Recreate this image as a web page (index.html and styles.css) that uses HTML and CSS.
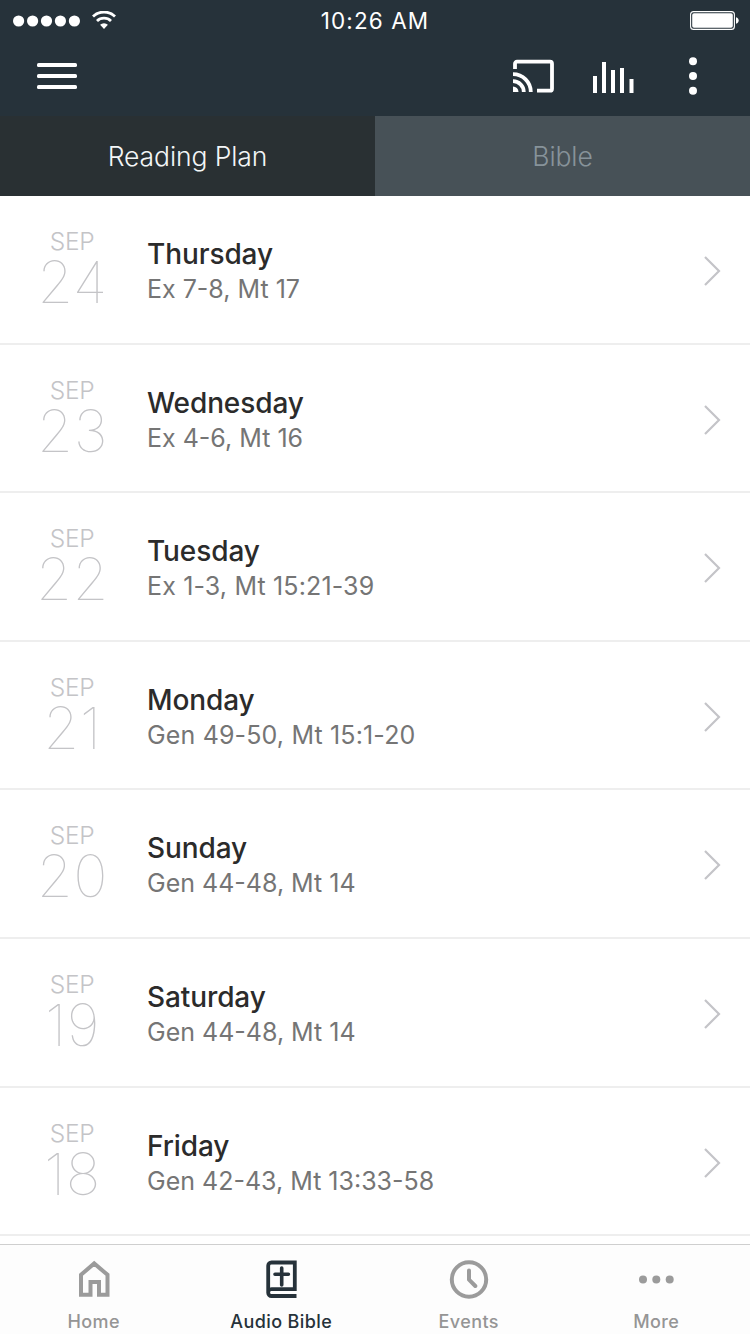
FILE: index.html
```html
<!DOCTYPE html>
<html lang="en">
<head>
    <meta charset="UTF-8">
    <meta name="viewport" content="width=device-width, initial-scale=1.0">
    <title>Audio Bible</title>
    <link rel="stylesheet" href="styles.css">
</head>
<body>
    <header class="header">
        <div class="status-bar">
            <div class="status-left">
                <svg class="signal" width="67" height="12" viewBox="0 0 67 12">
                    <circle cx="5.6" cy="6" r="5.6"/>
                    <circle cx="19.6" cy="6" r="5.6"/>
                    <circle cx="33.5" cy="6" r="5.6"/>
                    <circle cx="47.4" cy="6" r="5.6"/>
                    <circle cx="61.4" cy="6" r="5.6"/>
                </svg>
                <svg class="wifi" width="24" height="18" viewBox="0 0 24 18">
                    <path d="M1 5.5a15.8 15.8 0 0 1 22 0M5 10a10 10 0 0 1 14 0" fill="none" stroke="#fff" stroke-width="2.8"/>
                    <path d="M12 18l-3.9-4.2a5.6 5.6 0 0 1 7.8 0z"/>
                </svg>
            </div>
            <div class="time">10:26 AM</div>
            <div class="status-right">
                <svg class="battery" width="49" height="19" viewBox="0 0 49 19">
                    <rect x=".6" y=".6" width="43.8" height="17.8" rx="3" fill="none" stroke="#fff" stroke-width="1.1"/>
                    <rect x="2.2" y="2.2" width="40.6" height="14.6" rx="1.8"/>
                    <path d="M46 6.2c3.6 1.2 3.6 5.4 0 6.6z"/>
                </svg>
            </div>
        </div>

        <div class="toolbar">
            <svg class="menu-icon" width="40" height="26" viewBox="0 0 40 26">
                <rect y="0" width="40" height="4" rx="1.6"/>
                <rect y="11" width="40" height="4" rx="1.6"/>
                <rect y="22" width="40" height="4" rx="1.6"/>
            </svg>
            <div class="toolbar-actions">
                <svg class="cast-icon" width="41" height="34" viewBox="0 0 41 34" fill="none" stroke="#fff" stroke-width="3.8">
                    <path d="M2 10V4.7a2 2 0 0 1 2-2h33a2 2 0 0 1 2 2v25a2 2 0 0 1-2 2H24"/>
                    <path d="M0 15.2A17.8 17.8 0 0 1 17.8 33M0 22.2A10.8 10.8 0 0 1 10.8 33"/>
                    <path d="M0 27.5a5.5 5.5 0 0 1 5.5 5.5H0z" fill="#fff" stroke="none"/>
                </svg>
                <svg class="levels-icon" width="41" height="31" viewBox="0 0 41 31">
                    <rect x="0" y="14" width="4" height="17"/>
                    <rect x="9" y="0" width="4" height="31"/>
                    <rect x="18" y="8" width="4" height="23"/>
                    <rect x="27" y="6" width="4" height="25"/>
                    <rect x="36.5" y="17" width="4" height="14"/>
                </svg>
                <svg class="dots-icon" width="8" height="38" viewBox="0 0 8 38">
                    <circle cx="4" cy="4.3" r="4"/>
                    <circle cx="4" cy="19" r="4"/>
                    <circle cx="4" cy="33.7" r="4"/>
                </svg>
            </div>
        </div>
    </header>

    <div class="tabs">
        <div class="tab active">Reading Plan</div>
        <div class="tab">Bible</div>
    </div>

    <div class="list">
        <div class="row">
            <div class="date"><div class="month">SEP</div><div class="num">24</div></div>
            <div class="info"><div class="day">Thursday</div><div class="passage">Ex 7-8, Mt 17</div></div>
            <svg class="chevron" width="18" height="30" viewBox="0 0 18 30"><path d="M2 1l14 14L2 29"/></svg>
        </div>
        <div class="row">
            <div class="date"><div class="month">SEP</div><div class="num">23</div></div>
            <div class="info"><div class="day">Wednesday</div><div class="passage">Ex 4-6, Mt 16</div></div>
            <svg class="chevron" width="18" height="30" viewBox="0 0 18 30"><path d="M2 1l14 14L2 29"/></svg>
        </div>
        <div class="row">
            <div class="date"><div class="month">SEP</div><div class="num">22</div></div>
            <div class="info"><div class="day">Tuesday</div><div class="passage wide">Ex 1-3, Mt 15:21-39</div></div>
            <svg class="chevron" width="18" height="30" viewBox="0 0 18 30"><path d="M2 1l14 14L2 29"/></svg>
        </div>
        <div class="row">
            <div class="date"><div class="month">SEP</div><div class="num">21</div></div>
            <div class="info"><div class="day">Monday</div><div class="passage wide">Gen 49-50, Mt 15:1-20</div></div>
            <svg class="chevron" width="18" height="30" viewBox="0 0 18 30"><path d="M2 1l14 14L2 29"/></svg>
        </div>
        <div class="row">
            <div class="date"><div class="month">SEP</div><div class="num">20</div></div>
            <div class="info"><div class="day">Sunday</div><div class="passage">Gen 44-48, Mt 14</div></div>
            <svg class="chevron" width="18" height="30" viewBox="0 0 18 30"><path d="M2 1l14 14L2 29"/></svg>
        </div>
        <div class="row">
            <div class="date"><div class="month">SEP</div><div class="num">19</div></div>
            <div class="info"><div class="day">Saturday</div><div class="passage">Gen 44-48, Mt 14</div></div>
            <svg class="chevron" width="18" height="30" viewBox="0 0 18 30"><path d="M2 1l14 14L2 29"/></svg>
        </div>
        <div class="row">
            <div class="date"><div class="month">SEP</div><div class="num">18</div></div>
            <div class="info"><div class="day">Friday</div><div class="passage">Gen 42-43, Mt 13:33-58</div></div>
            <svg class="chevron" width="18" height="30" viewBox="0 0 18 30"><path d="M2 1l14 14L2 29"/></svg>
        </div>
    </div>

    <nav class="nav">
        <div class="nav-item">
            <svg width="40" height="40" viewBox="0 0 40 40" fill="none" stroke="#9b9b9b" stroke-width="4">
                <path d="M7 14.8L20.2 3.5l13.3 11.3v20H25V22H16.5v12.8H7z"/>
            </svg>
            <span>Home</span>
        </div>
        <div class="nav-item active">
            <svg width="40" height="40" viewBox="0 0 40 40" fill="none" stroke="#26323a" stroke-width="3.8">
                <path d="M35.5 36H10.5a3.3 3.3 0 0 1-3.3-3.3V5.8a3.3 3.3 0 0 1 3.3-3.3h23.3v26.7H10.5a3.3 3.3 0 0 0-3.3 3.3"/>
                <path d="M20.7 8v17M14 14.3h13.4" stroke-linecap="round" stroke-width="3.6"/>
            </svg>
            <span>Audio Bible</span>
        </div>
        <div class="nav-item">
            <svg width="40" height="40" viewBox="0 0 40 40" fill="none" stroke="#9b9b9b" stroke-width="4">
                <circle cx="20" cy="19.5" r="17.2"/>
                <path d="M20 10.5V19.7l6.3 6.3" stroke-linecap="round" stroke-linejoin="round"/>
            </svg>
            <span>Events</span>
        </div>
        <div class="nav-item">
            <svg width="40" height="40" viewBox="0 0 40 40" fill="#9b9b9b">
                <circle cx="7" cy="19.6" r="4"/>
                <circle cx="20.3" cy="19.6" r="4"/>
                <circle cx="33.7" cy="19.6" r="4"/>
            </svg>
            <span>More</span>
        </div>
    </nav>
</body>
</html>
```
FILE: styles.css
```css
* {
    box-sizing: border-box;
}

body {
    font-family: Inter, "Liberation Sans", sans-serif;
    margin: 0;
    width: 750px;
    height: 1334px;
    background-color: #fff;
    display: flex;
    flex-direction: column;
    overflow: hidden;
}

svg {
    display: block;
    flex: none;
}

.header {
    height: 116px;
    flex: none;
    background-color: #26323a;
    color: #fff;
    fill: #fff;
}

.status-bar {
    display: flex;
    align-items: center;
    height: 41px;
    padding: 0 11px 0 13px;
}

.status-left,
.status-right {
    flex: 1;
    display: flex;
    align-items: center;
}

.status-left {
    gap: 12px;
}

.wifi {
    margin-top: -2px;
}

.status-right {
    justify-content: flex-end;
}

.time {
    font-size: 22.5px;
    line-height: 41px;
    letter-spacing: 1.1px;
    margin-right: 2px;
}

.toolbar {
    display: flex;
    align-items: center;
    justify-content: space-between;
    height: 70px;
    padding: 0 53px 0 37px;
}

.toolbar-actions {
    display: flex;
    align-items: center;
}

.levels-icon {
    margin: 3px 55px 0 39px;
}

.tabs {
    display: flex;
    height: 80px;
    flex: none;
}

.tab {
    flex: 1;
    background-color: #475157;
    color: #87939a;
    font-size: 26.5px;
    font-weight: 300;
    line-height: 80px;
    letter-spacing: -0.1px;
    text-align: center;
}

.tab.active {
    background-color: #293033;
    color: #f3f6f7;
}

.list {
    flex: 1;
    overflow: hidden;
}

.row {
    display: flex;
    height: 148.6px;
    border-bottom: 2px solid #eee;
}

.date {
    width: 145px;
    padding-top: 31px;
    text-align: center;
    color: #c4c4c7;
}

.month {
    font-size: 24.5px;
    font-weight: 300;
    line-height: 28px;
    letter-spacing: -0.3px;
    padding-right: 1px;
}

.num {
    font-size: 58px;
    font-weight: 100;
    line-height: 54px;
    letter-spacing: 0.5px;
}

.info {
    flex: 1;
    padding: 40px 0 0 2px;
}

.day {
    font-size: 28px;
    font-weight: 500;
    line-height: 36px;
    letter-spacing: -0.1px;
    color: #2b2b2b;
}

.passage {
    font-size: 25px;
    line-height: 34px;
    color: #757575;
}

.passage.wide {
    letter-spacing: 0.15px;
}

.chevron {
    margin: 60px 29px 0 0;
    fill: none;
    stroke: #c4c4c8;
    stroke-width: 2.2;
}

.nav {
    display: flex;
    height: 90px;
    flex: none;
    border-top: 1px solid #cfcfcf;
    background-color: #fdfdfd;
}

.nav-item {
    flex: 1;
    display: flex;
    flex-direction: column;
    align-items: center;
    padding-top: 15px;
    font-size: 18px;
    font-weight: 500;
    letter-spacing: 0.4px;
    color: #959595;
}

.nav-item span {
    line-height: 24px;
    margin-top: 10px;
}

.nav-item.active {
    color: #26323a;
}
```
